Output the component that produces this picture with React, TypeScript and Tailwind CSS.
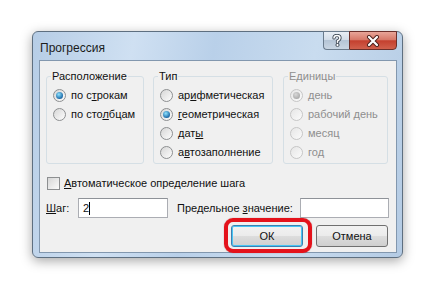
import React from 'react'

// Диалог «Прогрессия» (Excel, Windows 7)

const font = { fontFamily: '"Liberation Sans", Arial, sans-serif' }

function Radio({ checked, disabled }: { checked?: boolean; disabled?: boolean }) {
    return (
        <span
            className={
                'w-[13px] h-[13px] rounded-full border flex items-center justify-center shrink-0 ' +
                (disabled
                    ? 'border-[#c6c6c6] bg-[linear-gradient(135deg,#e6e6e6,#fbfbfb)]'
                    : 'border-[#8d8f91] bg-[linear-gradient(135deg,#d6d6d6,#fdfdfd)]')
            }
        >
            {checked && (
                <span
                    className={
                        'w-[7px] h-[7px] rounded-full ' +
                        (disabled
                            ? 'bg-[radial-gradient(circle_at_40%_35%,#d8d8d8,#9a9a9a)]'
                            : 'bg-[radial-gradient(circle_at_40%_35%,#8fe3ff,#1d6aa8_70%,#0e3f72)]')
                    }
                />
            )}
        </span>
    )
}

function Option({ children, checked, disabled }: { children: React.ReactNode; checked?: boolean; disabled?: boolean }) {
    return (
        <div className={'h-[19px] flex items-center gap-[5px] whitespace-nowrap ' + (disabled ? 'text-[#8e8e8e]' : 'text-[#111]')}>
            <Radio checked={checked} disabled={disabled} />
            <span>{children}</span>
        </div>
    )
}

function Group({ title, width, disabled, children }: { title: string; width: string; disabled?: boolean; children: React.ReactNode }) {
    return (
        <fieldset className={'h-[95px] border border-[#d5dfe5] rounded-[3px] pl-[6px] pt-[3px] ' + width}>
            <legend className={'-ml-[2px] px-[1px] leading-[14px] ' + (disabled ? 'text-[#8e8e8e]' : 'text-[#111]')}>{title}</legend>
            {children}
        </fieldset>
    )
}

function Button({ children, focused }: { children: React.ReactNode; focused?: boolean }) {
    return (
        <div
            className={
                'w-[72px] h-[22px] rounded-[3px] border flex items-center justify-center text-[#111] ' +
                'bg-[linear-gradient(#f2f2f2_0%,#ebebeb_50%,#dddddd_51%,#cfcfcf_100%)] ' +
                (focused ? 'border-[#3c7fb1] shadow-[inset_0_0_0_1px_#48c5f4]' : 'border-[#707070]')
            }
        >
            {children}
        </div>
    )
}

export default function App() {
    return (
        <div className="w-[434px] h-[294px] bg-white pt-[31px] pl-[32px] text-[11px]" style={font}>
            {/* окно */}
            <div className="w-[371px] h-[227px] rounded-[6px] border border-[#5e6f80] shadow-[0_3px_12px_rgba(0,0,0,0.35)]
                      bg-[linear-gradient(100deg,#b6cde6_0%,#cfe0f2_25%,#b9d0e9_45%,#c9dcef_70%,#b4cbe4_100%)]
                      flex flex-col pl-[6px] pr-[5px] pb-[4px]">
                {/* заголовок */}
                <div className="h-[28px] flex items-start justify-between">
                    <span className="pt-[7px] pl-[1px] text-[#1b1b1b] text-[12px]">Прогрессия</span>
                    <div className="flex -mt-[1px]">
                        <div className="w-[26px] h-[19px] rounded-bl-[4px] border border-[#6a7b8c] border-r-0
                                  bg-[linear-gradient(#e8eef5_0%,#d3dde8_45%,#b5c5d6_50%,#c9d6e3_100%)] flex items-center justify-center">
                            <svg width="10" height="13" viewBox="0 0 10 13">
                                <path d="M2 4 Q2 1.5 5 1.5 Q8 1.5 8 4 Q8 5.8 5.5 7 L5.5 8.5" fill="none" stroke="#3a4552" strokeWidth="3.2" strokeLinecap="round" />
                                <path d="M2 4 Q2 1.5 5 1.5 Q8 1.5 8 4 Q8 5.8 5.5 7 L5.5 8.5" fill="none" stroke="#ffffff" strokeWidth="1.5" strokeLinecap="round" />
                                <circle cx="5.5" cy="11" r="1.6" fill="#ffffff" stroke="#3a4552" strokeWidth="0.9" />
                            </svg>
                        </div>
                        <div className="w-[48px] h-[19px] rounded-br-[4px] border border-[#6b2f2a]
                                  bg-[linear-gradient(#e8a598_0%,#d77969_45%,#c4402f_52%,#d0604c_100%)] flex items-center justify-center">
                            <svg width="14" height="12" viewBox="0 0 14 12">
                                <path d="M3 2 L11 10 M11 2 L3 10" stroke="#4a1f1a" strokeWidth="4" strokeLinecap="round" />
                                <path d="M3 2 L11 10 M11 2 L3 10" stroke="#ffffff" strokeWidth="2.2" strokeLinecap="round" />
                            </svg>
                        </div>
                    </div>
                </div>

                {/* содержимое */}
                <div className="flex-1 bg-[#f0f0f0] border border-[#8297ae] flex flex-col">
                    <div className="flex pt-[8px] pl-[6px] gap-[9px]">
                        <Group title="Расположение" width="w-[98px]">
                            <Option checked>по с<u>т</u>рокам</Option>
                            <Option>по сто<u>л</u>бцам</Option>
                        </Group>
                        <Group title="Тип" width="w-[120px]">
                            <Option>ар<u>и</u>фметическая</Option>
                            <Option checked><u>г</u>еометрическая</Option>
                            <Option>дат<u>ы</u></Option>
                            <Option>а<u>в</u>тозаполнение</Option>
                        </Group>
                        <div className="ml-[1px]">
                            <Group title="Единицы" width="w-[105px]" disabled>
                                <Option checked disabled>день</Option>
                                <Option disabled>рабочий день</Option>
                                <Option disabled>месяц</Option>
                                <Option disabled>год</Option>
                            </Group>
                        </div>
                    </div>

                    {/* флажок */}
                    <div className="h-[16px] mt-[11px] pl-[7px] flex items-center gap-[4px] text-[#111]">
                        <span className="w-[13px] h-[13px] border border-[#8d8f91] bg-[linear-gradient(135deg,#d6d6d6,#fbfbfb)]" />
                        <span><u>А</u>втоматическое определение шага</span>
                    </div>

                    {/* шаг и предельное значение */}
                    <div className="h-[20px] mt-[7px] pl-[6px] flex items-center text-[#111]">
                        <span className="w-[32px]"><u>Ш</u>аг:</span>
                        <div className="w-[90px] h-[20px] border border-[#abadb3] border-t-[#8e9298] bg-white flex items-center pl-[4px]">
                            <span>2</span>
                            <span className="w-[1px] h-[13px] bg-black" />
                        </div>
                        <span className="ml-[9px] w-[123px] whitespace-nowrap">Предельное <u>з</u>начение:</span>
                        <div className="w-[89px] h-[20px] border border-[#abadb3] border-t-[#8e9298] bg-white" />
                    </div>

                    {/* кнопки */}
                    <div className="mt-[7px] pr-[8px] flex justify-end gap-[13px]">
                        <div className="relative">
                            <Button focused>ОК</Button>
                            <div className="absolute -left-[7px] -right-[9px] -top-[7px] -bottom-[6px] rounded-[9px] border-[4px] border-[#e4121b]
                                      shadow-[0_0_1px_rgba(120,0,0,0.6)]" />
                        </div>
                        <Button>Отмена</Button>
                    </div>
                </div>
            </div>
        </div>
    )
}
